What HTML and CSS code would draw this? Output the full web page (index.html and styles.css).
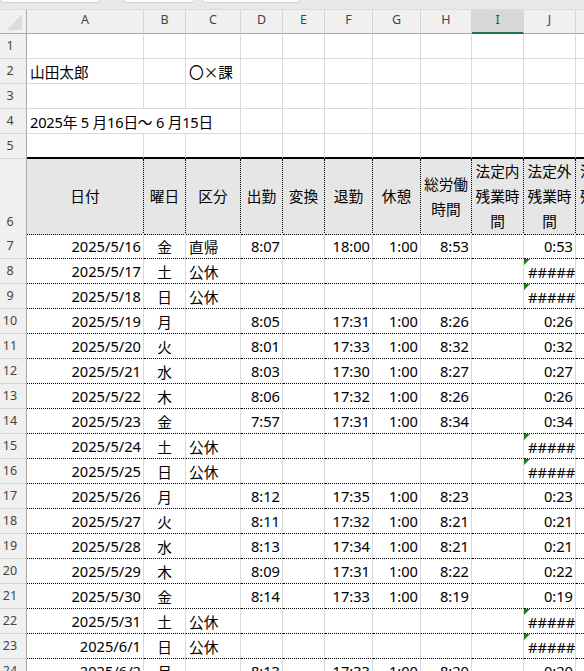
FILE: index.html
```html
<!DOCTYPE html>
<html lang="ja">
<head>
<meta charset="utf-8">
<link rel="stylesheet" href="styles.css">
</head>
<body>
<div class="ribbon"><div class="tab t1"></div><div class="tab t2"></div><div class="tab t3"></div></div>
<div class="sheet">
<div class="row colhdr"><div class="corner"><svg width="16" height="18" viewBox="0 0 16 18"><polygon points="15,1 15,17 0,17" fill="#dcdcdc"/></svg></div><div class="ch">A</div><div class="ch">B</div><div class="ch">C</div><div class="ch">D</div><div class="ch">E</div><div class="ch">F</div><div class="ch">G</div><div class="ch">H</div><div class="ch sel">I</div><div class="ch">J</div><div class="ch"></div></div>
<div class="row"><div class="rh">1</div><div class="c"></div><div class="c"></div><div class="c"></div><div class="c"></div><div class="c"></div><div class="c"></div><div class="c"></div><div class="c"></div><div class="c"></div><div class="c"></div><div class="c"></div></div>
<div class="row"><div class="rh">2</div><div class="c l">山田太郎</div><div class="c"></div><div class="c l jp">〇×課</div><div class="c"></div><div class="c"></div><div class="c"></div><div class="c"></div><div class="c"></div><div class="c"></div><div class="c"></div><div class="c"></div></div>
<div class="row"><div class="rh">3</div><div class="c"></div><div class="c"></div><div class="c"></div><div class="c"></div><div class="c"></div><div class="c"></div><div class="c"></div><div class="c"></div><div class="c"></div><div class="c"></div><div class="c"></div></div>
<div class="row"><div class="rh">4</div><div class="c l span3 tight">2025年 5 月16日～ 6 月15日</div><div class="c"></div><div class="c"></div><div class="c"></div><div class="c"></div><div class="c"></div><div class="c"></div><div class="c"></div><div class="c"></div></div>
<div class="row"><div class="rh">5</div><div class="c b5"></div><div class="c b5"></div><div class="c b5"></div><div class="c b5"></div><div class="c b5"></div><div class="c b5"></div><div class="c b5"></div><div class="c b5"></div><div class="c b5"></div><div class="c b5"></div><div class="c b5"></div></div>
<div class="row hdr6"><div class="rh">6</div><div class="c h6">日付</div><div class="c h6">曜日</div><div class="c h6">区分</div><div class="c h6">出勤</div><div class="c h6">変換</div><div class="c h6">退勤</div><div class="c h6">休憩</div><div class="c h6">総労働<br>時間</div><div class="c h6">法定内<br>残業時<br>間</div><div class="c h6">法定外<br>残業時<br>間</div><div class="c h6 kcol">法定休<br>残業時<br>間</div></div>
<div class="row"><div class="rh">7</div><div class="c d r">2025/5/16</div><div class="c d m">金</div><div class="c d l">直帰</div><div class="c d r">8:07</div><div class="c d"></div><div class="c d r">18:00</div><div class="c d r">1:00</div><div class="c d r">8:53</div><div class="c d"></div><div class="c d r">0:53</div><div class="c d"></div></div>
<div class="row"><div class="rh">8</div><div class="c d r">2025/5/17</div><div class="c d m">土</div><div class="c d l">公休</div><div class="c d"></div><div class="c d"></div><div class="c d"></div><div class="c d"></div><div class="c d"></div><div class="c d"></div><div class="c d err">#####</div><div class="c d"></div></div>
<div class="row"><div class="rh">9</div><div class="c d r">2025/5/18</div><div class="c d m">日</div><div class="c d l">公休</div><div class="c d"></div><div class="c d"></div><div class="c d"></div><div class="c d"></div><div class="c d"></div><div class="c d"></div><div class="c d err">#####</div><div class="c d"></div></div>
<div class="row"><div class="rh">10</div><div class="c d r">2025/5/19</div><div class="c d m">月</div><div class="c d l"></div><div class="c d r">8:05</div><div class="c d"></div><div class="c d r">17:31</div><div class="c d r">1:00</div><div class="c d r">8:26</div><div class="c d"></div><div class="c d r">0:26</div><div class="c d"></div></div>
<div class="row"><div class="rh">11</div><div class="c d r">2025/5/20</div><div class="c d m">火</div><div class="c d l"></div><div class="c d r">8:01</div><div class="c d"></div><div class="c d r">17:33</div><div class="c d r">1:00</div><div class="c d r">8:32</div><div class="c d"></div><div class="c d r">0:32</div><div class="c d"></div></div>
<div class="row"><div class="rh">12</div><div class="c d r">2025/5/21</div><div class="c d m">水</div><div class="c d l"></div><div class="c d r">8:03</div><div class="c d"></div><div class="c d r">17:30</div><div class="c d r">1:00</div><div class="c d r">8:27</div><div class="c d"></div><div class="c d r">0:27</div><div class="c d"></div></div>
<div class="row"><div class="rh">13</div><div class="c d r">2025/5/22</div><div class="c d m">木</div><div class="c d l"></div><div class="c d r">8:06</div><div class="c d"></div><div class="c d r">17:32</div><div class="c d r">1:00</div><div class="c d r">8:26</div><div class="c d"></div><div class="c d r">0:26</div><div class="c d"></div></div>
<div class="row"><div class="rh">14</div><div class="c d r">2025/5/23</div><div class="c d m">金</div><div class="c d l"></div><div class="c d r">7:57</div><div class="c d"></div><div class="c d r">17:31</div><div class="c d r">1:00</div><div class="c d r">8:34</div><div class="c d"></div><div class="c d r">0:34</div><div class="c d"></div></div>
<div class="row"><div class="rh">15</div><div class="c d r">2025/5/24</div><div class="c d m">土</div><div class="c d l">公休</div><div class="c d"></div><div class="c d"></div><div class="c d"></div><div class="c d"></div><div class="c d"></div><div class="c d"></div><div class="c d err">#####</div><div class="c d"></div></div>
<div class="row"><div class="rh">16</div><div class="c d r">2025/5/25</div><div class="c d m">日</div><div class="c d l">公休</div><div class="c d"></div><div class="c d"></div><div class="c d"></div><div class="c d"></div><div class="c d"></div><div class="c d"></div><div class="c d err">#####</div><div class="c d"></div></div>
<div class="row"><div class="rh">17</div><div class="c d r">2025/5/26</div><div class="c d m">月</div><div class="c d l"></div><div class="c d r">8:12</div><div class="c d"></div><div class="c d r">17:35</div><div class="c d r">1:00</div><div class="c d r">8:23</div><div class="c d"></div><div class="c d r">0:23</div><div class="c d"></div></div>
<div class="row"><div class="rh">18</div><div class="c d r">2025/5/27</div><div class="c d m">火</div><div class="c d l"></div><div class="c d r">8:11</div><div class="c d"></div><div class="c d r">17:32</div><div class="c d r">1:00</div><div class="c d r">8:21</div><div class="c d"></div><div class="c d r">0:21</div><div class="c d"></div></div>
<div class="row"><div class="rh">19</div><div class="c d r">2025/5/28</div><div class="c d m">水</div><div class="c d l"></div><div class="c d r">8:13</div><div class="c d"></div><div class="c d r">17:34</div><div class="c d r">1:00</div><div class="c d r">8:21</div><div class="c d"></div><div class="c d r">0:21</div><div class="c d"></div></div>
<div class="row"><div class="rh">20</div><div class="c d r">2025/5/29</div><div class="c d m">木</div><div class="c d l"></div><div class="c d r">8:09</div><div class="c d"></div><div class="c d r">17:31</div><div class="c d r">1:00</div><div class="c d r">8:22</div><div class="c d"></div><div class="c d r">0:22</div><div class="c d"></div></div>
<div class="row"><div class="rh">21</div><div class="c d r">2025/5/30</div><div class="c d m">金</div><div class="c d l"></div><div class="c d r">8:14</div><div class="c d"></div><div class="c d r">17:33</div><div class="c d r">1:00</div><div class="c d r">8:19</div><div class="c d"></div><div class="c d r">0:19</div><div class="c d"></div></div>
<div class="row"><div class="rh">22</div><div class="c d r">2025/5/31</div><div class="c d m">土</div><div class="c d l">公休</div><div class="c d"></div><div class="c d"></div><div class="c d"></div><div class="c d"></div><div class="c d"></div><div class="c d"></div><div class="c d err">#####</div><div class="c d"></div></div>
<div class="row"><div class="rh">23</div><div class="c d r">2025/6/1</div><div class="c d m">日</div><div class="c d l">公休</div><div class="c d"></div><div class="c d"></div><div class="c d"></div><div class="c d"></div><div class="c d"></div><div class="c d"></div><div class="c d err">#####</div><div class="c d"></div></div>
<div class="row"><div class="rh">24</div><div class="c d r">2025/6/2</div><div class="c d m">月</div><div class="c d l"></div><div class="c d r">8:13</div><div class="c d"></div><div class="c d r">17:33</div><div class="c d r">1:00</div><div class="c d r">8:20</div><div class="c d"></div><div class="c d r">0:20</div><div class="c d"></div></div>
</div>
</body>
</html>
```
FILE: styles.css
```css
* { box-sizing: border-box; margin: 0; padding: 0; }
html, body { width: 584px; height: 671px; overflow: hidden; background: #fff; }
body { font-family: "Noto Sans", "Noto Sans CJK JP", sans-serif; font-size: 14.67px; color: #000; }

.ribbon { height: 10px; background: #e8e8ea; display: flex; align-items: flex-start; border-bottom: 1px solid #dcdcdc; }
.tab { height: 3px; background: #fafafa; border: 1px solid #d4d4d4; border-top: 0; border-radius: 0 0 5px 5px; }
.t1 { width: 100px; }
.t2 { width: 72px; margin-left: 23px; }
.t3 { width: 98px; margin-left: 7px; }

.sheet { width: 700px; }
.row { display: grid; grid-template-columns: 27px 117px 42px 55px 42px 42px 48px 48px 51px 52px 52px 60px; height: 25px; }
.colhdr { height: 24px; }
.hdr6 { height: 75px; }

.corner { background: #f0f0f0; border-right: 1px solid #a9a9a9; border-bottom: 1px solid #a9a9a9; display: flex; align-items: flex-end; justify-content: flex-end; padding: 0 3px 2px 0; }
.corner svg { display: block; }

.ch { background: #f0f0f0; border-right: 1px solid #d4d4d4; border-bottom: 1px solid #a9a9a9; display: flex; align-items: center; justify-content: center; padding-bottom: 4px; color: #444; font-size: 12.5px; }
.ch.sel { background: #d8d8d8; border-bottom: 2px solid #217346; color: #1d5f3c; padding-bottom: 3px; }

.rh { background: #f0f0f0; border-right: 1px solid #a9a9a9; border-bottom: 1px solid #d4d4d4; display: flex; align-items: flex-end; justify-content: center; padding-right: 6px; line-height: 24px; color: #444; font-size: 12.5px; }

.c { display: flex; align-items: center; border-right: 1px solid #dadada; border-bottom: 1px solid #dadada; white-space: nowrap; position: relative; }
.span3 { grid-column: span 3; }
.tight { letter-spacing: -0.2px; }
.jp { font-family: "Noto Sans CJK JP", sans-serif; }
.b5 { border-bottom: 2px solid #000; }

.h6 { background: #e7e6e6; border-right: 1px dotted #000; border-bottom: 1px dotted #000; justify-content: center; text-align: center; line-height: 25px; white-space: normal; }
.kcol { justify-content: flex-start; padding-left: 4px; }

.d { border-bottom: 1px dotted #000; }
.r { justify-content: flex-end; padding-right: 2px; }
.m { justify-content: center; }
.l { padding-left: 3px; }

.err { justify-content: flex-start; padding-left: 4px; letter-spacing: 0; padding-top: 2px; }
.err::before { content: ""; position: absolute; left: 0; top: 0; border-top: 6px solid #1b7d1b; border-right: 6px solid transparent; }
```
